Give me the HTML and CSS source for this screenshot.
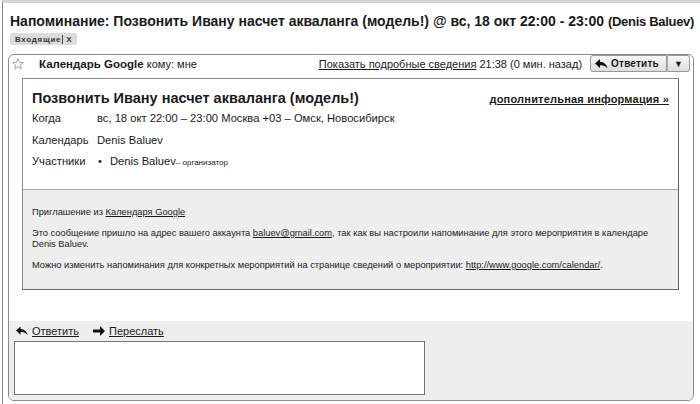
FILE: index.html
```html
<!DOCTYPE html>
<html lang="ru">
<head>
  <meta charset="UTF-8">
  <title>Напоминание</title>
  <link rel="stylesheet" href="styles.css">
</head>
<body>

<div class="page">
  <h1 class="subject">Напоминание: Позвонить Ивану насчет акваланга (модель!) @ вс, 18 окт 22:00 - 23:00 <span class="who">(Denis Baluev)</span></h1>
  <div class="labels"><span class="chip">Входящие <span class="sep"></span> X</span></div>

  <div class="card">
    <div class="msg-head">
      <svg class="star" width="12" height="12" viewBox="0 0 12 12"><polygon points="6,0.8 7.5,4.3 11.3,4.5 8.4,7 9.3,10.8 6,8.8 2.7,10.8 3.6,7 0.7,4.5 4.5,4.3" fill="none" stroke="#999" stroke-width="0.9"/></svg>
      <span class="from"><b>Календарь Google</b> кому: мне</span>
      <span class="meta"><a href="#">Показать подробные сведения</a> 21:38 (0 мин. назад)</span>
      <span class="btn-group">
        <span class="btn">
          <svg width="13" height="10" viewBox="0 0 13 10"><path d="M5 0 L0 4.5 L5 9 L5 6.2 C8 6 10.5 7 12.5 9.5 C11.8 5.5 9 3 5 2.8 Z" fill="#111"/></svg>
          Ответить
        </span><span class="btn drop">▼</span>
      </span>
    </div>

    <div class="invite">
      <div class="invite-top">
        <div class="event-row">
          <h2 class="event-title">Позвонить Ивану насчет акваланга (модель!)</h2>
          <a href="#" class="more">дополнительная информация »</a>
        </div>
        <div class="field"><span class="key">Когда</span><span>вс, 18 окт 22:00 – 23:00 Москва +03 – Омск, Новосибирск</span></div>
        <div class="field"><span class="key">Календарь</span><span>Denis Baluev</span></div>
        <div class="field"><span class="key">Участники</span><span><span class="bullet">•</span>Denis Baluev<small>– организатор</small></span></div>
      </div>
      <div class="invite-foot">
        <p>Приглашение из <a href="#">Календаря Google</a></p>
        <p>Это сообщение пришло на адрес вашего аккаунта <a href="#">baluev@gmail.com</a>, так как вы настроили напоминание для этого мероприятия в календаре Denis Baluev.</p>
        <p>Можно изменить напоминания для конкретных мероприятий на странице сведений о мероприятии: <a href="#">http://www.google.com/calendar/</a>.</p>
      </div>
    </div>

    <div class="reply">
      <div class="reply-links">
        <span class="rl">
          <svg width="12" height="10" viewBox="0 0 13 10"><path d="M5 0 L0 4.5 L5 9 L5 6.2 C8 6 10.5 7 12.5 9.5 C11.8 5.5 9 3 5 2.8 Z" fill="#111"/></svg>
          <a href="#">Ответить</a>
        </span>
        <span class="rl">
          <svg width="12" height="10" viewBox="0 0 12 10"><path d="M7 0 L12 5 L7 10 L7 6.4 L0 6.4 L0 3.6 L7 3.6 Z" fill="#111"/></svg>
          <a href="#">Переслать</a>
        </span>
      </div>
      <div class="reply-box"></div>
    </div>
  </div>
</div>

</body>
</html>
```

FILE: styles.css
```css
body {
  margin: 0;
  font-family: "Liberation Sans", Arial, sans-serif;
  color: #1a1a1a;
  background-color: #fff;
}
a {
  color: #1a1a1a;
}
.page {
  margin-left: 2px;
  border-left: 1px solid #888;
  border-top: 3px solid #d6d6d6;
  height: 401px;
  padding: 0 6px 0 5px;
}
.subject {
  margin: 0;
  padding: 8px 0 0 2px;
  font-size: 14px;
  line-height: 20px;
  font-weight: bold;
  white-space: nowrap;
}
.subject .who {
  font-size: 13px;
  letter-spacing: -0.3px;
}
.labels {
  display: flex;
  margin-top: 1px;
  padding-left: 2px;
}
.chip {
  display: inline-flex;
  align-items: center;
  background-color: #dcdcdc;
  border-radius: 2px;
  font-size: 8px;
  font-weight: bold;
  padding: 0 5px 0 5px;
  height: 12px;
  letter-spacing: 0.7px;
  color: #333;
}
.chip .sep {
  display: inline-block;
  width: 1px;
  height: 9px;
  background-color: #444;
  margin: 0 3px 0 1px;
}
.card {
  margin-top: 9px;
  border: 1px solid #8a8a8a;
  border-radius: 6px;
  height: 345px;
  display: flex;
  flex-direction: column;
  overflow: hidden;
}
.msg-head {
  display: flex;
  align-items: center;
  height: 17px;
  padding: 0 3px 0 3px;
  font-size: 11px;
}
.star {
  margin-right: 15px;
}
.from b {
  font-size: 11.5px;
}
.meta {
  margin-left: auto;
  margin-right: 8px;
}
.btn-group {
  display: flex;
}
.btn {
  display: flex;
  align-items: center;
  gap: 3px;
  height: 15px;
  padding: 0 7px 0 4px;
  border: 1px solid #999;
  background: linear-gradient(#f7f7f7, #dedede);
  font-size: 10px;
  font-weight: bold;
  letter-spacing: 0.2px;
  border-radius: 3px 0 0 3px;
}
.btn.drop {
  border-left: 1px solid #aaa;
  border-radius: 0 3px 3px 0;
  padding: 0 6px;
  font-size: 9px;
}
.invite {
  margin: 6px 14px 0 13px;
  border: 1px solid #8a8a8a;
  border-right-color: #666;
  border-bottom-color: #666;
}
.invite-top {
  height: 110px;
  padding: 0 9px;
  border-bottom: 1px solid #aaa;
}
.event-row {
  display: flex;
  align-items: baseline;
  padding-top: 9px;
}
.event-title {
  margin: 0;
  font-size: 14.5px;
  line-height: 20px;
}
.more {
  margin-left: auto;
  font-size: 11px;
  font-weight: bold;
  letter-spacing: 0.2px;
}
.field {
  display: flex;
  font-size: 11.2px;
  line-height: 21.5px;
}
.key {
  width: 65px;
}
.bullet {
  margin: 0 8px 0 1px;
}
.field small {
  font-size: 8px;
}
.invite-foot {
  box-sizing: border-box;
  background-color: #eee;
  height: 99px;
  padding: 17px 20px 0 9px;
  font-size: 9.3px;
}
.invite-foot p {
  margin: 0 0 10px;
  line-height: 11px;
}
.reply {
  margin-top: 31px;
  background-color: #eee;
  flex: 1;
  padding: 4px 5px 0 5px;
}
.reply-links {
  display: flex;
  gap: 14px;
  font-size: 11px;
  padding-left: 2px;
}
.rl {
  display: flex;
  align-items: center;
  gap: 4px;
}
.reply-box {
  margin-top: 4px;
  width: 409px;
  height: 52px;
  border: 1px solid #777;
  background-color: #fff;
}
```
